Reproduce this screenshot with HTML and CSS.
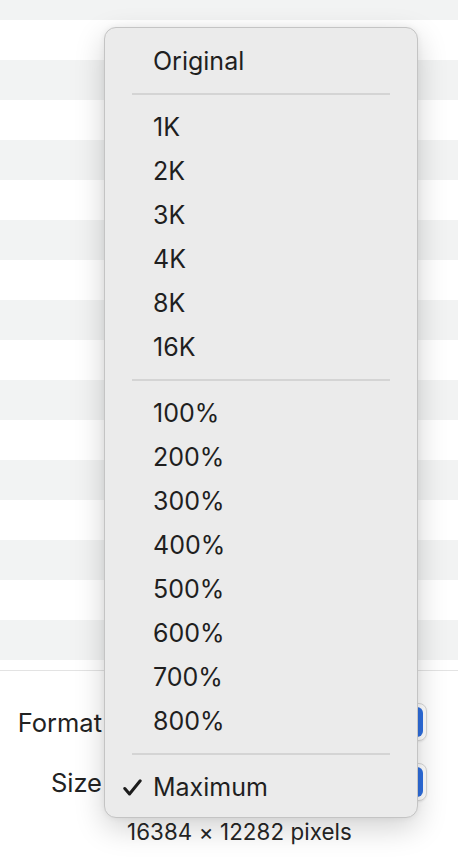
FILE: index.html
```html
<!DOCTYPE html>
<html>
<head>
<meta charset="utf-8">
<link rel="stylesheet" href="styles.css">
</head>
<body>
<div class="window">
  <div class="table">
    <div class="row row-top"></div>
    <div class="row"></div><div class="row alt"></div>
    <div class="row"></div><div class="row alt"></div>
    <div class="row"></div><div class="row alt"></div>
    <div class="row"></div><div class="row alt"></div>
    <div class="row"></div><div class="row alt"></div>
    <div class="row"></div><div class="row alt"></div>
    <div class="row"></div><div class="row alt"></div>
    <div class="row"></div><div class="row alt"></div>
  </div>
  <div class="form">
    <div class="field">
      <span class="label">Format</span>
      <div class="popup"><span class="popup-arrows"></span></div>
    </div>
    <div class="field">
      <span class="label">Size</span>
      <div class="popup"><span class="popup-arrows"></span></div>
    </div>
    <div class="note">16384 × 12282 pixels</div>
  </div>

  <div class="menu">
    <div class="item">Original</div>
    <div class="sep"></div>
    <div class="item">1K</div>
    <div class="item">2K</div>
    <div class="item">3K</div>
    <div class="item">4K</div>
    <div class="item">8K</div>
    <div class="item">16K</div>
    <div class="sep"></div>
    <div class="item">100%</div>
    <div class="item">200%</div>
    <div class="item">300%</div>
    <div class="item">400%</div>
    <div class="item">500%</div>
    <div class="item">600%</div>
    <div class="item">700%</div>
    <div class="item">800%</div>
    <div class="sep"></div>
    <div class="item checked">
      <svg class="check" width="19" height="17" viewBox="0 0 19 17"><polyline points="1.8,9.5 6.5,15 17.2,1.8" fill="none" stroke="#1c1c1c" stroke-width="3" stroke-linecap="round" stroke-linejoin="round"/></svg>
      Maximum
    </div>
  </div>
</div>
</body>
</html>
```

FILE: styles.css
```css
html, body {
  margin: 0;
  padding: 0;
  background: #ffffff;
}
body {
  font-family: Inter, "Noto Sans", "Liberation Sans", sans-serif;
  color: #222222;
}
.window {
  position: relative;
  width: 458px;
  height: 862px;
  overflow: hidden;
  background: #ffffff;
}
.table {
  display: flex;
  flex-direction: column;
}
.row {
  height: 40px;
  background: #ffffff;
}
.row.alt, .row-top {
  background: #f2f3f3;
}
.row-top {
  height: 20px;
}
.form {
  margin-top: 10px;
  border-top: 1px solid #e3e3e3;
  padding-top: 32px;
  display: flex;
  flex-direction: column;
}
.field {
  display: flex;
  align-items: center;
  height: 38px;
  margin-bottom: 22px;
}
.label {
  width: 102px;
  text-align: right;
  font-size: 25.5px;
  color: #222222;
}
.popup {
  margin-left: 18px;
  width: 299px;
  height: 30px;
  border: 1px solid #dadada;
  border-radius: 8px;
  background: #ffffff;
  box-shadow: 0 1px 2px rgba(0,0,0,0.08);
  display: flex;
  justify-content: flex-end;
  align-items: stretch;
  padding: 3px;
}
.popup-arrows {
  width: 30px;
  border-radius: 6px;
  background: #2f6fe0;
}
.note {
  margin-top: -5px;
  margin-left: 127px;
  font-size: 22.3px;
  color: #262626;
  letter-spacing: 0.1px;
}
.menu {
  position: absolute;
  left: 104px;
  top: 27px;
  width: 312px;
  padding: 11px 0 8px;
  background: #ebebeb;
  border: 1px solid #c4c4c4;
  border-radius: 12px;
  box-shadow: 0 10px 30px rgba(0,0,0,0.18), 0 0 6px rgba(0,0,0,0.06);
}
.item {
  height: 44px;
  line-height: 44px;
  padding-left: 48px;
  font-size: 25px;
  color: #1f1f1f;
  position: relative;
}
.check {
  position: absolute;
  left: 18px;
  top: 14px;
}
.sep {
  height: 2px;
  margin: 10px 27px;
  background: #d4d4d4;
}
```
